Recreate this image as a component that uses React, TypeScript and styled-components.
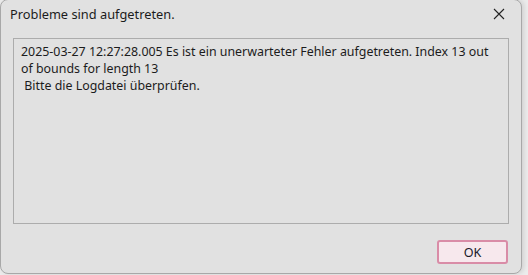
import React from "react";
import styled, { createGlobalStyle } from "styled-components";

const Global = createGlobalStyle`
  html, body { margin: 0; padding: 0; }
  body {
    width: 528px;
    height: 275px;
    overflow: hidden;
    background: #ececec;
    font-family: "Noto Sans", "Open Sans", sans-serif;
  }
`;

const Win = styled.div`
  box-sizing: border-box;
  width: 522px;
  height: 275px;
  margin-top: -1px;
  background: #e1e1e1;
  border: 1px solid #a8a8a8;
  border-radius: 8px;
  box-shadow: 2px 0 5px rgba(0, 0, 0, 0.12);
  display: flex;
  flex-direction: column;
`;

const TitleBar = styled.div`
  height: 27px;
  display: flex;
  align-items: center;
  justify-content: space-between;
  padding: 0 16px 0 9px;
  margin-top: 1px;
`;

const Title = styled.span`
  font-size: 12.8px;
  color: #1c1c1c;
`;

const Close = styled.button`
  border: 0;
  background: none;
  padding: 0;
  width: 12px;
  height: 12px;
  display: flex;
  color: #222;
`;

const Body = styled.div`
  flex: 1;
  display: flex;
  flex-direction: column;
  padding: 11px 12px 9px 12px;
`;

const MessageBox = styled.div`
  box-sizing: border-box;
  height: 186px;
  border: 1px solid #acacac;
  padding: 4px 6px 3px 7px;
  font-size: 12.4px;
  line-height: 17px;
  color: #1c1c1c;
  white-space: pre-wrap;
`;

const Footer = styled.div`
  display: flex;
  justify-content: flex-end;
  margin-top: 15px;
  padding-right: 1px;
`;

const OkButton = styled.button`
  box-sizing: border-box;
  width: 71px;
  height: 24px;
  margin-top: 1px;
  border: 2px solid #d98ca7;
  border-radius: 3px;
  background: #f7e8ed;
  font-family: "Noto Sans", "Open Sans", sans-serif;
  font-size: 12.6px;
  color: #1a1a2a;
  padding: 0;
`;

export default function App() {
  return (
    <>
      <Global />
      <Win>
        <TitleBar>
          <Title>Probleme sind aufgetreten.</Title>
          <Close aria-label="Schließen">
            <svg width="12" height="12" viewBox="0 0 12 12">
              <path d="M1 1 L11 11 M11 1 L1 11" stroke="currentColor" strokeWidth="1.1" fill="none" />
            </svg>
          </Close>
        </TitleBar>
        <Body>
          <MessageBox>
            {"2025-03-27 12:27:28.005 Es ist ein unerwarteter Fehler aufgetreten. Index 13 out of bounds for length 13\n Bitte die Logdatei überprüfen."}
          </MessageBox>
          <Footer>
            <OkButton>OK</OkButton>
          </Footer>
        </Body>
      </Win>
    </>
  );
}
